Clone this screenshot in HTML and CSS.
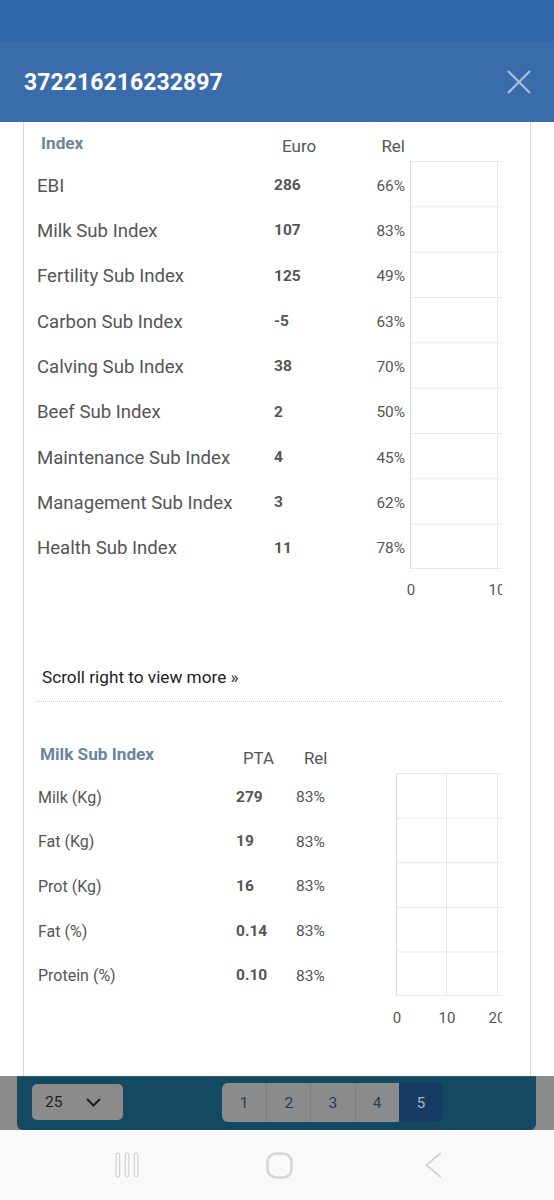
FILE: index.html
```html
<!DOCTYPE html>
<html>
<head>
<meta charset="utf-8">
<link rel="stylesheet" href="styles.css">
</head>
<body>
<div class="status"></div>
<div class="header">
  <div class="title">372216216232897</div>
  <svg class="close" width="24" height="24" viewBox="0 0 24 24"><path d="M1 1 L23 23 M23 1 L1 23" stroke="#a7c1e0" stroke-width="2.2" fill="none"/></svg>
</div>
<div class="main">
  <div class="card">
    <div class="tbl1">
      <div class="h-index">Index</div>
      <div class="h-euro">Euro</div>
      <div class="h-rel">Rel</div>
      <div></div>
      <svg class="chart1" width="97" height="443" viewBox="0 0 97 443">
        <g stroke="#e8e8e8" stroke-width="1">
          <line x1="5" y1="0.5" x2="97" y2="0.5"/>
          <line x1="5" y1="45.8" x2="97" y2="45.8"/>
          <line x1="5" y1="91.2" x2="97" y2="91.2"/>
          <line x1="5" y1="136.5" x2="97" y2="136.5"/>
          <line x1="5" y1="181.8" x2="97" y2="181.8"/>
          <line x1="5" y1="227.2" x2="97" y2="227.2"/>
          <line x1="5" y1="272.5" x2="97" y2="272.5"/>
          <line x1="5" y1="317.8" x2="97" y2="317.8"/>
          <line x1="5" y1="363.2" x2="97" y2="363.2"/>
          <line x1="5" y1="407.5" x2="97" y2="407.5"/>
          <line x1="92.5" y1="0" x2="92.5" y2="408"/>
        </g>
        <line x1="5.5" y1="0" x2="5.5" y2="408" stroke="#dcdcdc" stroke-width="1"/>
        <text class="ax" x="6" y="434" text-anchor="middle">0</text>
        <text class="ax" x="92" y="434" text-anchor="middle">10</text>
      </svg>
      <div class="lbl">EBI</div><div class="val">286</div><div class="rel">66%</div>
      <div class="lbl">Milk Sub Index</div><div class="val">107</div><div class="rel">83%</div>
      <div class="lbl">Fertility Sub Index</div><div class="val">125</div><div class="rel">49%</div>
      <div class="lbl">Carbon Sub Index</div><div class="val">-5</div><div class="rel">63%</div>
      <div class="lbl">Calving Sub Index</div><div class="val">38</div><div class="rel">70%</div>
      <div class="lbl">Beef Sub Index</div><div class="val">2</div><div class="rel">50%</div>
      <div class="lbl">Maintenance Sub Index</div><div class="val">4</div><div class="rel">45%</div>
      <div class="lbl">Management Sub Index</div><div class="val">3</div><div class="rel">62%</div>
      <div class="lbl">Health Sub Index</div><div class="val">11</div><div class="rel">78%</div>
    </div>
    <div class="scroll-hint">Scroll right to view more »</div>
    <div class="divider"></div>
    <div class="tbl2">
      <div class="h2-index">Milk Sub Index</div>
      <div class="h2-pta">PTA</div>
      <div class="h2-rel">Rel</div>
      <div></div>
      <svg class="chart2" width="111" height="263" viewBox="0 0 111 263">
        <g stroke="#e8e8e8" stroke-width="1">
          <line x1="5" y1="0.5" x2="111" y2="0.5"/>
          <line x1="5" y1="45.1" x2="111" y2="45.1"/>
          <line x1="5" y1="89.7" x2="111" y2="89.7"/>
          <line x1="5" y1="134.3" x2="111" y2="134.3"/>
          <line x1="5" y1="178.9" x2="111" y2="178.9"/>
          <line x1="5" y1="222.5" x2="111" y2="222.5"/>
          <line x1="55.5" y1="0" x2="55.5" y2="223"/>
          <line x1="106.5" y1="0" x2="106.5" y2="223"/>
        </g>
        <line x1="5.5" y1="0" x2="5.5" y2="223" stroke="#dcdcdc" stroke-width="1"/>
        <text class="ax" x="6" y="250" text-anchor="middle">0</text>
        <text class="ax" x="56" y="250" text-anchor="middle">10</text>
        <text class="ax" x="106" y="250" text-anchor="middle">20</text>
      </svg>
      <div class="lbl2">Milk (Kg)</div><div class="val2">279</div><div class="rel2">83%</div>
      <div class="lbl2">Fat (Kg)</div><div class="val2">19</div><div class="rel2">83%</div>
      <div class="lbl2">Prot (Kg)</div><div class="val2">16</div><div class="rel2">83%</div>
      <div class="lbl2">Fat (%)</div><div class="val2">0.14</div><div class="rel2">83%</div>
      <div class="lbl2">Protein (%)</div><div class="val2">0.10</div><div class="rel2">83%</div>
    </div>
  </div>
</div>
<div class="bar">
  <div class="bar-inner">
    <div class="select">
      <span class="sel-val">25</span>
      <svg width="15" height="9" viewBox="0 0 15 9"><path d="M1 1 L7.5 7.5 L14 1" stroke="#1e1e1e" stroke-width="2" fill="none"/></svg>
    </div>
    <div class="pager">
      <div class="pg">1</div>
      <div class="pg">2</div>
      <div class="pg">3</div>
      <div class="pg">4</div>
      <div class="pg active">5</div>
    </div>
  </div>
</div>
<div class="nav">
  <div class="nav-item">
    <svg width="24" height="26" viewBox="0 0 24 26"><g fill="none" stroke="#d2d2d2" stroke-width="1.2"><rect x="1" y="1" width="3.6" height="24" rx="1.8"/><rect x="10.2" y="1" width="3.6" height="24" rx="1.8"/><rect x="19.4" y="1" width="3.6" height="24" rx="1.8"/></g></svg>
  </div>
  <div class="nav-item">
    <svg width="27" height="27" viewBox="0 0 27 27"><rect x="1.5" y="1.5" width="24" height="24" rx="8.5" fill="none" stroke="#d6d6d6" stroke-width="2.6"/></svg>
  </div>
  <div class="nav-item">
    <svg width="18" height="26" viewBox="0 0 18 26"><path d="M16 1.5 L2.5 13 L16 24.5" fill="none" stroke="#d6d6d6" stroke-width="2.2" stroke-linejoin="round" stroke-linecap="round"/></svg>
  </div>
</div>
</body>
</html>
```
FILE: styles.css
```css
* { box-sizing: border-box; }
html, body { margin: 0; padding: 0; }
body {
  width: 554px;
  height: 1200px;
  overflow: hidden;
  font-family: Roboto, "Liberation Sans", sans-serif;
  background: #fff;
  display: flex;
  flex-direction: column;
}
.status { height: 42px; background: #2f68a8; flex: none; }
.header {
  height: 80px;
  flex: none;
  background: #3a6cac;
  display: flex;
  align-items: center;
  justify-content: space-between;
  padding: 0 23px 0 24px;
}
.title { color: #fff; font-weight: 700; font-size: 23px; letter-spacing: 0.05px; }
.close { display: block; }
.main { height: 954px; flex: none; overflow: hidden; }
.card {
  margin-left: 23px;
  width: 508px;
  height: 954px;
  border-left: 1px solid #d6d6d6;
  border-right: 1px solid #d6d6d6;
  padding: 0 28px 0 13px;
}
.tbl1 {
  display: grid;
  grid-template-columns: 237px 86px 45px 97px;
  grid-template-rows: 39px repeat(9, 45.33px) 35px;
  color: #555;
}
.chart1 { grid-column: 4; grid-row: 2 / span 10; display: block; }
.chart2 { grid-column: 4; grid-row: 2 / span 6; display: block; }
.ax { font-family: Roboto, "Liberation Sans", sans-serif; font-size: 15px; fill: #555; }
.h-index { font-weight: 700; font-size: 17.2px; color: #6a85a2; line-height: 20px; padding: 11px 0 0 4px; }
.h-euro { font-size: 17px; line-height: 20px; padding: 14px 0 0 8px; color: #555; white-space: nowrap; }
.h-rel { font-size: 17px; line-height: 20px; padding: 14px 0 0 0; text-align: right; color: #555; }
.lbl { font-size: 18.6px; display: flex; align-items: center; color: #555; padding-top: 4px; white-space: nowrap; }
.val { font-size: 15.5px; font-weight: 700; display: flex; align-items: center; color: #555; padding-top: 3px; }
.rel { font-size: 15.4px; display: flex; align-items: center; justify-content: flex-end; color: #555; padding-top: 4px; }
.scroll-hint {
  margin-top: 63px;
  padding-left: 5px;
  font-size: 17.2px;
  line-height: 20px;
  color: #222;
}
.divider { margin-top: 14px; border-top: 1px dotted #c8c8c8; height: 0; }
.tbl2 {
  display: grid;
  grid-template-columns: 199px 60px 95px 111px;
  grid-template-rows: 71px repeat(5, 44.6px) 40px;
  color: #555;
}
.h2-index { font-weight: 700; font-size: 17.2px; color: #6a85a2; line-height: 20px; padding: 42px 0 0 3px; white-space: nowrap; }
.h2-pta { font-size: 16.8px; line-height: 20px; padding: 46px 0 0 7px; }
.h2-rel { font-size: 16.8px; line-height: 20px; padding: 46px 0 0 8px; }
.lbl2 { font-size: 16px; display: flex; align-items: center; padding: 4px 0 0 1px; white-space: nowrap; }
.val2 { font-size: 15.5px; font-weight: 700; display: flex; align-items: center; padding-top: 3px; }
.rel2 { font-size: 15.5px; display: flex; align-items: center; padding-top: 4px; }
.bar { height: 54px; flex: none; background: #8b8b8b; }
.bar-inner {
  margin: 0 18px 0 17px;
  height: 54px;
  background: #134a62;
  border-top: 1px solid #2c5b6e;
  border-radius: 0 0 6px 6px;
  display: flex;
  align-items: flex-start;
  padding: 7px 0 0 15px;
}
.select {
  width: 91px;
  height: 36px;
  background: #8b8b8b;
  border-radius: 5px;
  display: flex;
  align-items: center;
  padding: 0 0 0 13px;
  gap: 24px;
}
.sel-val { font-size: 15.5px; color: #1f1f1f; }
.select svg { display: block; }
.pager {
  margin-left: 99px;
  margin-top: -1px;
  display: flex;
  height: 39px;
  border-radius: 6px;
  overflow: hidden;
}
.pg {
  width: 44.2px;
  background: #8b8b8b;
  color: #2e3d4e;
  font-size: 15.5px;
  display: flex;
  align-items: center;
  justify-content: center;
  border-left: 1px solid #7e7e7e;
}
.pg:first-child { border-left: none; }
.pg.active { background: #163b63; color: #a0b3c8; border-left: none; }
.nav {
  height: 70px;
  flex: none;
  background: #f9f9f9;
  display: grid;
  grid-template-columns: 1fr 1fr 1fr;
  padding: 0 44px 0 50px;
  align-items: center;
}
.nav-item { display: flex; justify-content: center; align-items: center; }
.nav-item svg { display: block; }
```
